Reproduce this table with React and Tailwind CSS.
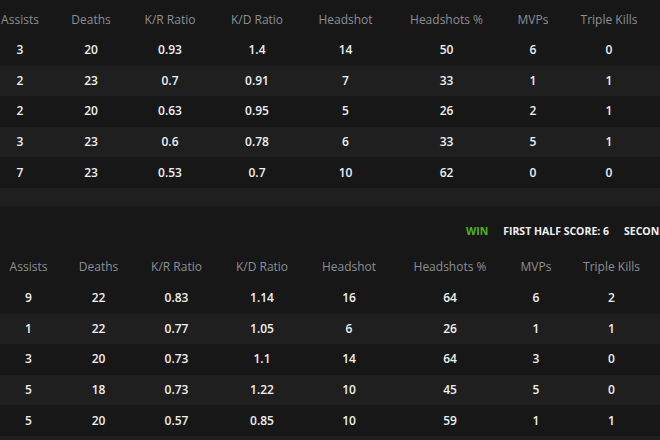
const headers = ['Assists', 'Deaths', 'K/R Ratio', 'K/D Ratio', 'Headshot', 'Headshots %', 'MVPs', 'Triple Kills'];

const firstTeam = [
  [3, 20, 0.93, 1.4, 14, 50, 6, 0],
  [2, 23, 0.7, 0.91, 7, 33, 1, 1],
  [2, 20, 0.63, 0.95, 5, 26, 2, 1],
  [3, 23, 0.6, 0.78, 6, 33, 5, 1],
  [7, 23, 0.53, 0.7, 10, 62, 0, 0],
];

const secondTeam = [
  [9, 22, 0.83, 1.14, 16, 64, 6, 2],
  [1, 22, 0.77, 1.05, 6, 26, 1, 1],
  [3, 20, 0.73, 1.1, 14, 64, 3, 0],
  [5, 18, 0.73, 1.22, 10, 45, 5, 0],
  [5, 20, 0.57, 0.85, 10, 59, 1, 1],
];

const StatsTable = ({ rows, cols, offset }) => {
  return (
    <div>
      <div className="flex h-[35px]">
        <div className={`flex pt-1 ${offset}`}>
          {headers.map((h, i) => (
            <div
              key={h}
              style={{ width: cols[i] }}
              className="flex items-center justify-center shrink-0 whitespace-nowrap text-[12px] text-[#8a9096]"
            >
              {h}
            </div>
          ))}
        </div>
      </div>
      {rows.map((row, r) => (
        <div key={r} className={`flex h-[30.6px] ${r % 2 === 1 ? 'bg-[#1f1f1f]' : ''}`}>
          <div className={`flex ${offset}`}>
            {row.map((v, i) => (
              <div
                key={i}
                style={{ width: cols[i] }}
                className="flex items-center justify-center shrink-0 text-[12px] font-semibold text-[#f0f0f0]"
              >
                {v}
              </div>
            ))}
          </div>
        </div>
      ))}
    </div>
  );
};

export default function App() {
  return (
    <div className="w-[660px] h-[440px] overflow-hidden bg-[#171717] font-['Open_Sans',sans-serif]">
      <StatsTable rows={firstTeam} cols={[72, 70, 88, 86, 91, 111, 62, 90]} offset="ml-[-16px]" />
      <div className="h-[17.7px] bg-[#1f1f1f]"></div>

      <div className="h-[42.3px] flex items-start pt-[18px] pl-[466px] gap-[15px] whitespace-nowrap text-[10.5px] font-bold uppercase">
        <span className="text-[#4cb81c]">Win</span>
        <span className="text-[#f0f0f0]">First half score: 6</span>
        <span className="text-[#f0f0f0]">Second half score: 10</span>
      </div>

      <StatsTable rows={secondTeam} cols={[71, 69, 87, 84, 90, 112, 60, 91]} offset="ml-[-7px]" />
      <div className="h-[20px] bg-[#1f1f1f]"></div>
    </div>
  );
}
